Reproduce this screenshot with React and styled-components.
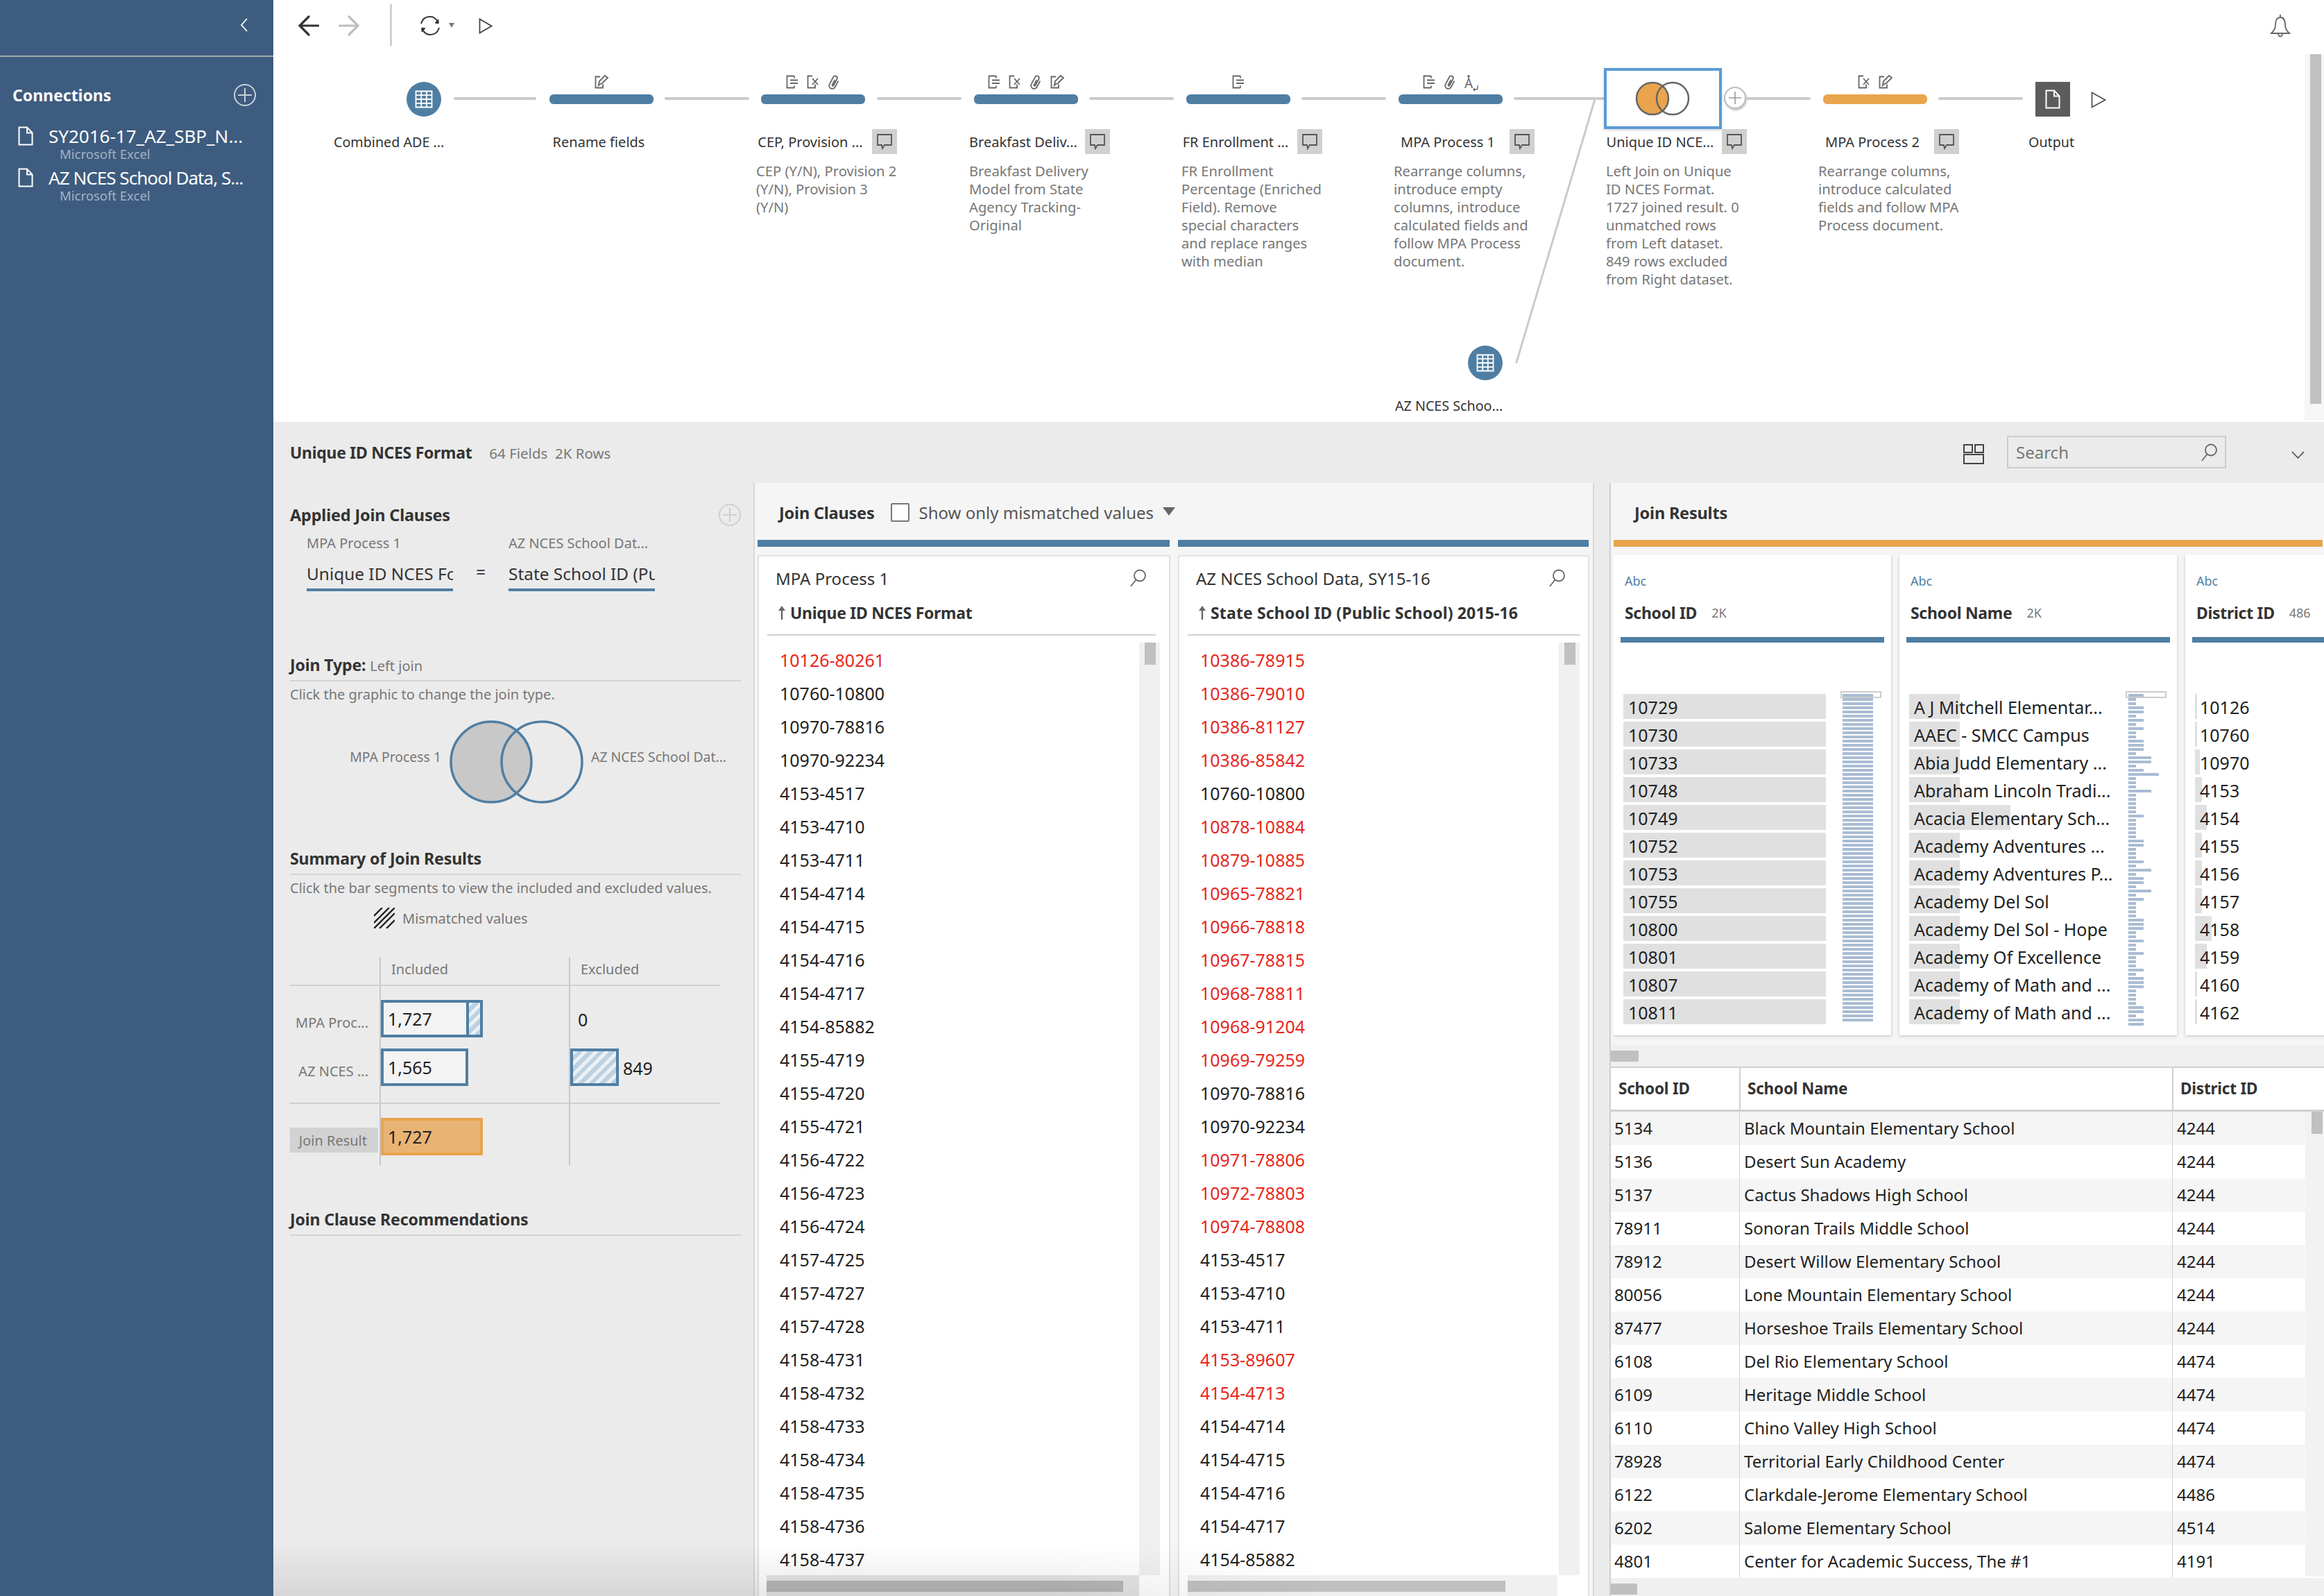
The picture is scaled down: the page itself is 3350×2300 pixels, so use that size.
import React from "react";
import styled, { createGlobalStyle } from "styled-components";

const BLUE = "#4f7ea3";
const ORANGE = "#e9a44c";
const FONT = `"Noto Sans", "Open Sans", sans-serif`;

const Global = createGlobalStyle`
  html, body { margin: 0; padding: 0; background: #ebebeb; }
  body { font-family: ${FONT}; color: #333; }
  * { box-sizing: border-box; }
`;

const Page = styled.div`
  position: relative; width: 3350px; height: 2300px; display: flex; overflow: hidden; background: #ebebeb;
`;
const BottomFade = styled.div`
  position: absolute; left: 394px; bottom: 0; width: 1520px; height: 75px; pointer-events: none;
  background: linear-gradient(to bottom, rgba(0,0,0,0), rgba(0,0,0,.085));
  mask-image: linear-gradient(to right, #000 72%, transparent);
`;

/* ---------- sidebar ---------- */
const Sidebar = styled.aside`
  width: 394px; flex: none; background: #3e5c7f; color: #fff; display: flex; flex-direction: column;
`;
const SideTop = styled.div`
  height: 82px; border-bottom: 2px solid #a7a9ac; display: flex; justify-content: flex-end;
  align-items: flex-start; padding: 26px 36px 0 0;
`;
const ConnHead = styled.div`
  display: flex; align-items: center; justify-content: space-between; padding: 0 25px 0 18px;
  margin-top: 37px; height: 36px;
`;
const ConnTitle = styled.div`font-size: 23px; font-weight: 700;`;
const ConnList = styled.div`margin-top: 27px; display: flex; flex-direction: column; gap: 12px;`;
const ConnItem = styled.div`display: flex; padding-left: 26px; height: 48px;`;
const ConnText = styled.div`margin-left: 22px; margin-top: -2px; display: flex; flex-direction: column;`;
const ConnName = styled.div`font-size: 26px; line-height: 32px; white-space: nowrap; letter-spacing: ${p => p.$ls}px;`;
const ConnSub = styled.div`font-size: 18.5px; line-height: 22px; color: #a5b2c2; margin-left: 16px; white-space: nowrap; margin-top: -1px;`;

/* ---------- main ---------- */
const Main = styled.main`flex: 1; min-width: 0; display: flex; flex-direction: column;`;
const Canvas = styled.section`position: relative; height: 608px; background: #fff; flex: none;`;
const Toolbar = styled.div`display: flex; align-items: flex-start; padding-left: 34px; height: 78px;`;
const ToolIcon = styled.svg`display: block; flex: none; margin-left: ${p => p.$ml || 0}px; margin-top: ${p => p.$mt || 0}px;`;
const ToolDivider = styled.div`width: 3px; height: 60px; margin: 6px 0 0 42px; background: #d0d0d0;`;
const BellWrap = styled.div`margin: 20px 48px 0 auto;`;

const Connectors = styled.svg`position: absolute; left: 0; top: 0; width: 2956px; height: 608px; pointer-events: none;`;
const VScroll = styled.div`position: absolute; right: 0; top: 78px; width: 28px; height: 528px; background: #f6f6f6;`;
const VThumb = styled.div`margin-left: 8px; width: 16px; height: 504px; background: #c0c0c0;`;

const Node = styled.div`
  position: absolute; left: ${p => p.$x - 394}px; top: ${p => p.$y}px; width: 220px; display: flex; flex-direction: column;
`;
const Upper = styled.div`height: 88px; padding-top: 10px; display: flex; flex-direction: column;`;
const IconRow = styled.div`
  height: 20px; width: 150px; margin-left: 7px; display: flex; justify-content: center; gap: 10px; color: #666;
`;
const StepBar = styled.div`
  width: 150px; height: 14px; margin: 8px 0 0 7px; border-radius: 6px; background: ${p => p.$c || BLUE};
`;
const TitleRow = styled.div`display: flex; align-items: center; height: 36px;`;
const NodeTitle = styled.div`
  width: 156px; text-align: center; font-size: 20px; color: #333; white-space: nowrap; margin-right: 11px;
`;
const NoteBtn = styled.div`
  width: 36px; height: 36px; background: #d0d0d0; display: flex; align-items: center; justify-content: center;
`;
const Desc = styled.div`margin-top: 11px; font-size: 20.2px; line-height: 26px; color: #777; white-space: pre-line; width: 230px;`;

const JoinBox = styled.div`
  width: 170px; height: 88px; margin: -10px 0 0 -3px; background: #fff; border: 4px solid #5b9bd5;
  box-shadow: 0 2px 4px rgba(0,0,0,.15); display: flex; align-items: center; justify-content: center;
`;
const AddBubble = styled.div`
  position: absolute; left: 170px; top: 27px; width: 32px; height: 32px; border-radius: 50%; background: #fff;
  border: 2px solid #bdbdbd; box-shadow: 1px 2px 3px rgba(0,0,0,.25); display: flex; align-items: center; justify-content: center;
`;
const SourceNode = styled.div`
  position: absolute; left: ${p => p.$x - 394}px; top: ${p => p.$y}px; width: 170px;
`;
const SourceCircle = styled.div`
  width: 50px; height: 50px; margin-left: 105px; border-radius: 50%; background: ${BLUE};
  display: flex; align-items: center; justify-content: center;
`;
const SourceLabel = styled.div`margin-top: 19px; height: 36px; line-height: 36px; font-size: 19.7px; color: #333; white-space: nowrap;`;
const OutputNode = styled.div`position: absolute; left: ${2924 - 394}px; top: 118px; width: 140px;`;
const OutputBox = styled.div`
  width: 50px; height: 50px; margin-left: 10px; background: #5c5c5c; display: flex; align-items: center; justify-content: center;
`;
const PlayOverlay = styled.svg`position: absolute; left: 90px; top: 14px;`;

/* ---------- details ---------- */
const Details = styled.section`flex: 1; min-height: 0; display: flex; flex-direction: column; background: #ebebeb;`;
const DetailHead = styled.div`height: 88px; flex: none; display: flex; align-items: flex-start; padding: 29px 0 0 24px; position: relative;`;
const DetailTitle = styled.div`font-size: 23px; line-height: 30px; font-weight: 700; color: #333; letter-spacing: -0.3px;`;
const DetailMeta = styled.div`font-size: 20.5px; line-height: 32px; color: #777; margin-left: 25px;`;
const LayoutIcon = styled.svg`margin: 3px 0 0 auto; flex: none;`;
const SearchBox = styled.div`
  width: 316px; height: 47px; margin: -9px 0 0 33px; border: 2px solid #ccc; background: #ebebeb; display: flex; align-items: center;
  padding: 0 10px 0 11px; justify-content: space-between; font-size: 24px; color: #777;
`;
const Chevron = styled.svg`margin: 13px 28px 0 94px; flex: none;`;

const Panels = styled.div`flex: 1; min-height: 0; display: flex;`;

/* left config column */
const ConfigCol = styled.div`width: 692px; flex: none; padding-left: 24px; padding-right: 18px; overflow: hidden;`;
const Section = styled.div`
  display: flex; align-items: center; justify-content: space-between; height: 30px; margin-top: ${p => p.$mt || 0}px;
`;
const SectionTitle = styled.div`font-size: 23.5px; line-height: 30px; font-weight: 700; color: #333; letter-spacing: -0.2px; white-space: nowrap;`;
const SectionRuled = styled.div`
  margin-top: ${p => p.$mt || 0}px; padding-bottom: 7px; border-bottom: 2px solid #d4d4d4; height: 39px; white-space: nowrap;
  font-size: 23.2px; line-height: 30px; font-weight: 700; color: #333; letter-spacing: -0.2px;
`;
const Lighter = styled.span`font-weight: 400; font-size: 20px; color: #777; letter-spacing: 0;`;
const Hint = styled.div`margin-top: 6px; font-size: 20px; line-height: 26px; color: #777; white-space: nowrap;`;
const ClauseRow = styled.div`display: grid; grid-template-columns: 211px 80px 211px; padding-left: 24px; margin-top: ${p => p.$mt || 0}px; align-items: start;`;
const ClauseLabel = styled.div`font-size: 20px; line-height: 26px; color: #777; white-space: nowrap;`;
const ClauseField = styled.div`
  height: 46px; border-bottom: 4px solid ${BLUE}; font-size: 24.4px; line-height: 42px; color: #333; overflow: hidden; white-space: nowrap;
`;
const ClauseEq = styled.div`text-align: center; font-size: 24px; line-height: 36px; color: #333;`;

const VennRow = styled.div`display: flex; align-items: flex-start; margin-top: 22px; height: 125px;`;
const VennLabel = styled.div`
  width: ${p => p.$w}px; text-align: ${p => p.$right ? "right" : "left"}; margin-top: 42px; font-size: 19.4px; line-height: 26px; color: #777; white-space: nowrap;
`;
const Legend = styled.div`display: flex; align-items: center; gap: 11px; height: 32px; margin: 14px 0 0 121px; font-size: 20px; color: #777;`;
const SumTable = styled.div`margin-top: 40px; width: 620px;`;
const SumRow = styled.div`display: flex; height: ${p => p.$h}px; border-bottom: ${p => p.$ruled ? "2px solid #cfcfcf" : "none"};`;
const SumLabelCell = styled.div`
  width: 129px; flex: none; padding-top: ${p => p.$top || 0}px; text-align: right; padding-right: 16px; font-size: 20px; line-height: 26px; color: #777; white-space: nowrap;
`;
const JoinLabel = styled.div`
  width: 127px; height: 36px; margin-top: 34px; background: #d2d2d2; text-align: right; padding-right: 16px; font-size: 20px; line-height: 38px; color: #777; flex: none; margin-right: 2px;
`;
const SumCell = styled.div`
  width: ${p => p.$w}px; flex: none; border-left: 2px solid #c8c8c8; padding-top: ${p => p.$top || 0}px; display: flex; align-items: flex-start;
`;
const HeadText = styled.div`font-size: 20px; line-height: 36px; color: #777; padding-left: 15px;`;
const SumBar = styled.div`
  width: ${p => p.$w}px; height: 54px; position: relative; border: 4px solid ${p => p.$c || BLUE}; background: ${p => p.$fill || "#f3f3f3"};
  font-size: 25px; line-height: 47px; color: #222; padding-left: 6px;
  ${p => p.$hatched ? `background: repeating-linear-gradient(-45deg, #bcd2e3 0 6px, #eef0f2 6px 11px);` : ""}
`;
const BarHatch = styled.div`
  position: absolute; right: 0; top: 0; bottom: 0; width: 20px; border-left: 4px solid ${BLUE};
  background: repeating-linear-gradient(-45deg, #bcd2e3 0 6px, #eef0f2 6px 11px);
`;
const SumValue = styled.div`font-size: 25px; line-height: 56px; color: #222; margin-left: ${p => p.$ml}px;`;

/* join clause panel */
const ClausePanel = styled.div`
  width: 1212px; flex: none; margin-right: 22px; background: #f5f5f5; border-left: 2px solid #d8d8d8; border-right: 2px solid #d8d8d8; display: flex; flex-direction: column; min-height: 0;
`;
const PanelHead = styled.div`
  height: 82px; flex: none; display: flex; align-items: flex-start; padding: 28px 0 0 ${p => p.$pl}px;
`;
const PanelTitle = styled.div`font-weight: 700; font-size: 23.5px; line-height: 30px; color: #333; letter-spacing: -0.2px;`;
const Check = styled.div`width: 27px; height: 27px; margin: 1px 0 0 23px; background: #fff; border: 2px solid #777; border-radius: 2px;`;
const CheckLabel = styled.div`margin-left: 14px; font-size: 24px; line-height: 30px; color: #555; white-space: nowrap;`;
const Caret = styled.div`
  margin: 7px 0 0 13px; width: 0; height: 0; border-left: 9px solid transparent; border-right: 9px solid transparent; border-top: 12px solid #666;
`;
const ClauseCols = styled.div`flex: 1; min-height: 0; display: grid; grid-template-columns: 594px 592px; gap: 12px; padding-left: 4px;`;
const ClauseCol = styled.div`display: flex; flex-direction: column; min-height: 0;`;
const ColorBar = styled.div`height: 10px; flex: none; background: ${p => p.$c || BLUE};`;
const ResultBar = styled(ColorBar)`margin: 0 2px 0 4px;`;
const ListCard = styled.div`
  position: relative; flex: 1; min-height: 0; margin: 14px 1px 0 2px; background: #fff; box-shadow: 0 0 0 2px #e2e2e2; overflow: hidden;
`;
const ListTitleRow = styled.div`
  display: flex; justify-content: space-between; align-items: center; height: 30px; margin-top: 16px; padding: 0 32px 0 24px; font-size: 24px; color: #333; white-space: nowrap;
`;
const ListField = styled.div`
  display: flex; align-items: center; gap: 6px; height: 30px; margin-top: 20px; padding-left: 27px; font-size: 23px; font-weight: 700; color: #333; white-space: nowrap; letter-spacing: ${p => p.$ls}px;
`;
const ListRule = styled.div`height: 2px; margin: 16px ${p => p.$mr}px 0 12px; background: #d0d0d0;`;
const ListRows = styled.div`margin-top: 11px; padding-left: 30px;`;
const ListRow = styled.div`height: 48px; line-height: 48px; font-size: 25px; color: ${p => p.$red ? "#e8261c" : "#222"};`;
const ListTrack = styled.div`position: absolute; left: ${p => p.$x}px; top: 124px; bottom: 30px; width: 30px; background: #f0f0f0;`;
const ListThumb = styled.div`margin-left: 8px; width: 16px; height: 32px; background: #c0c0c0;`;
const HTrack = styled.div`position: absolute; left: ${p => p.$x}px; bottom: 0; width: ${p => p.$w}px; height: 30px; background: ${p => p.$bg}; padding-top: 8px;`;
const HThumb = styled.div`height: 16px; width: ${p => p.$w}px; background: ${p => p.$c};`;

/* results panel */
const ResultPanel = styled.div`flex: 1; min-width: 0; background: #f5f5f5; border-left: 2px solid #cfcfcf; display: flex; flex-direction: column; min-height: 0;`;
const ResultCards = styled.div`display: flex; gap: 12px; margin: 12px 0 0 4px; height: 700px; padding-bottom: 8px; flex: none; overflow: hidden;`;
const ProfileCard = styled.div`position: relative; width: 400px; flex: none; height: 692px; background: #fff; box-shadow: 0 1px 4px rgba(0,0,0,.22);`;
const AbcTag = styled.div`height: 24px; margin: 25px 0 0 16px; font-size: 18px; line-height: 24px; color: ${BLUE};`;
const ProfileName = styled.div`
  height: 30px; margin: 19px 0 0 16px; display: flex; align-items: center; font-size: 23px; font-weight: 700; color: #333; letter-spacing: -0.3px; white-space: nowrap;
`;
const ProfileCount = styled.span`font-weight: 400; font-size: 18px; color: #777; margin-left: 21px; letter-spacing: 0;`;
const ProfileBar = styled.div`height: 8px; margin: 20px 10px 0; background: ${BLUE};`;
const ValueList = styled.div`margin: 74px 0 0 14px; display: flex; flex-direction: column; gap: 4px;`;
const ValueRow = styled.div`position: relative; height: 36px; width: 292px; font-size: 25px; line-height: 38px; color: #222; padding-left: 7px; white-space: nowrap;`;
const ValueFill = styled.div`position: absolute; left: 0; top: 0; bottom: 0; width: ${p => p.$w}px; background: #e0e0e0;`;
const ValueText = styled.span`position: relative;`;
const Spark = styled.div`position: absolute; left: 330px; top: 200px; display: flex; flex-direction: column; gap: 2px;`;
const SparkBar = styled.div`height: 4px; width: ${p => p.$w}px; background: #a9bcd4;`;
const Brush = styled.div`position: absolute; left: ${p => p.$x}px; top: 196px; width: 59px; height: 10px; border: 2px solid #ccc;`;
const ResultHScroll = styled.div`height: 31px; margin-top: 6px; background: #f0f0f0; padding-top: 8px; flex: none;`;
const ResultHThumb = styled.div`width: 40px; height: 16px; background: #c0c0c0;`;
const DataTable = styled.div`position: relative; flex: 1; min-height: 0; background: #fff; border-top: 2px solid #d0d0d0; display: flex; flex-direction: column;`;
const TableHead = styled.div`
  display: grid; grid-template-columns: 185px 624px 1fr; height: 63px; flex: none; border-bottom: 3px solid #d0d0d0; font-size: 22.5px; font-weight: 700; color: #333; letter-spacing: -0.2px;
`;
const HeadCell = styled.div`
  border-left: ${p => p.$first ? "none" : "2px solid #d0d0d0"}; padding-left: ${p => p.$first ? 11 : 10}px; line-height: 60px;
`;
const TableRow = styled.div`
  display: grid; grid-template-columns: 185px 624px 1fr; height: 48px; flex: none; background: ${p => p.$alt ? "#f5f5f5" : "#fff"}; font-size: 24px; color: #222;
`;
const BodyCell = styled.div`
  border-left: ${p => p.$first ? "none" : "1px solid #d0d0d0"}; padding-left: ${p => p.$first ? 5 : 6}px; line-height: 48px; white-space: nowrap;
`;
const TableVTrack = styled.div`position: absolute; right: 0; top: 63px; bottom: 28px; width: 27px; background: #f2f2f2; padding: 0 2px 0 9px;`;
const TableVThumb = styled.div`height: 32px; background: #c0c0c0;`;
const TableHScroll = styled.div`height: 28px; margin-top: auto; flex: none; background: #f0f0f0; padding-top: 8px;`;
const TableHThumb = styled.div`width: 38px; height: 16px; background: #c0c0c0;`;

/* ---------- icons ---------- */
const stroke = { fill: "none", stroke: "currentColor", strokeWidth: 1.8 };
const IconSvg = styled.svg`display: block; color: ${p => p.$c || "#666"}; flex: none;`;
const ColumnIco = () => (
  <IconSvg width="20" height="20" viewBox="0 0 20 20"><path {...stroke} d="M13 1.5H2.5v17H13M13 18.5v-3M13 1.5v3M7 7.5h11M7 12h11" /></IconSvg>
);
const RemoveIco = () => (
  <IconSvg width="20" height="20" viewBox="0 0 20 20"><path {...stroke} d="M9 1.5H2.5v17H13v-5M9 5l8 9M17 5l-8 9" /></IconSvg>
);
const ClipIco = () => (
  <IconSvg width="20" height="22" viewBox="0 0 20 22">
    <path {...stroke} transform="rotate(28 10 11)" d="M14.5 6v10a4.500 4.500 0 0 1-9 0V4.500a3 3 0 0 1 6 0V15a1 1 0 0 1-2 0V7" />
  </IconSvg>
);
const EditIco = () => (
  <IconSvg width="22" height="20" viewBox="0 0 22 20"><path {...stroke} d="M9 2.5H2.5v16H13v-5M7 14l1-5 8-8 4 3-8 8zM6 16l2-2" /></IconSvg>
);
const TypeIco = () => (
  <IconSvg width="22" height="25" viewBox="0 0 22 25">
    <text x="1" y="19" fontFamily={FONT} fontSize="19" fill="#666">A</text>
    <path {...stroke} strokeWidth="1.4" d="M7 0.500v5M5.200 2.500 7 0.500l1.800 2M20 15v4a2 2 0 0 1-2 2h-4M16 19l-2 2 2 2" />
  </IconSvg>
);
const ICONS = { c: ColumnIco, r: RemoveIco, p: ClipIco, e: EditIco, t: TypeIco };
const NoteIco = () => (
  <IconSvg width="24" height="24" viewBox="0 0 24 24" $c="#555"><path {...stroke} d="M2 2h20v15H12l-3 5-1-5H2z" /></IconSvg>
);
const GridIco = () => (
  <IconSvg width="26" height="26" viewBox="0 0 26 26" $c="#fff">
    <path {...stroke} d="M1.5 1.5h23v23h-23zM9.200 1.5v23M16.800 1.5v23M1.5 7.200h23M1.5 13h23M1.5 18.800h23" />
  </IconSvg>
);
const DocIco = ({ color = "#fff" }) => (
  <IconSvg width="22" height="28" viewBox="0 0 22 28" $c={color}>
    <path {...stroke} strokeWidth="2" d="M1.5 1.5H13l7.5 8v17H1.5zM13 1.5V9.500h7.5" />
  </IconSvg>
);
const Mag = ({ size = 26 }) => (
  <IconSvg width={size} height={size} viewBox="0 0 26 26" $c="#666">
    <circle {...stroke} cx="16" cy="9.500" r="8" /><path {...stroke} d="M10.500 15.500 3 25" />
  </IconSvg>
);
const Plus = ({ size = 32, color = "#c8d0da", width = 2 }) => (
  <IconSvg width={size} height={size} viewBox="0 0 32 32" $c={color}>
    <circle cx="16" cy="16" r="15" fill="none" stroke="currentColor" strokeWidth={width} />
    <path d="M16 6v20M6 16h20" fill="none" stroke="currentColor" strokeWidth={width} />
  </IconSvg>
);
const SortArrow = () => (
  <IconSvg width="12" height="20" viewBox="0 0 12 20" $c="#666"><path d="M6 0 11 7H7.200v13H4.800V7H1z" fill="currentColor" /></IconSvg>
);

/* ---------- data ---------- */
const steps = [
  { x: 785, icons: "e", title: "Rename fields" },
  { x: 1090, icons: "crp", title: "CEP, Provision ...", note: 1, desc: "CEP (Y/N), Provision 2\n(Y/N), Provision 3\n(Y/N)" },
  { x: 1397, icons: "crpe", title: "Breakfast Deliv...", note: 1, desc: "Breakfast Delivery\nModel from State\nAgency Tracking-\nOriginal" },
  { x: 1703, icons: "c", title: "FR Enrollment ...", note: 1, desc: "FR Enrollment\nPercentage (Enriched\nField). Remove\nspecial characters\nand replace ranges\nwith median" },
  { x: 2009, icons: "cpt", title: "MPA Process 1", note: 1, desc: "Rearrange columns,\nintroduce empty\ncolumns, introduce\ncalculated fields and\nfollow MPA Process\ndocument." },
  { x: 2621, icons: "re", title: "MPA Process 2", note: 1, color: ORANGE, desc: "Rearrange columns,\nintroduce calculated\nfields and follow MPA\nProcess document." },
];
const connectors = [[656,771],[960,1078],[1266,1384],[1572,1690],[1878,1996],[2184,2312],[2520,2608],[2796,2914]];

const leftIds = ["10126-80261","10760-10800","10970-78816","10970-92234","4153-4517","4153-4710","4153-4711","4154-4714","4154-4715","4154-4716","4154-4717","4154-85882","4155-4719","4155-4720","4155-4721","4156-4722","4156-4723","4156-4724","4157-4725","4157-4727","4157-4728","4158-4731","4158-4732","4158-4733","4158-4734","4158-4735","4158-4736","4158-4737"];
const rightIds = [["10386-78915",1],["10386-79010",1],["10386-81127",1],["10386-85842",1],["10760-10800"],["10878-10884",1],["10879-10885",1],["10965-78821",1],["10966-78818",1],["10967-78815",1],["10968-78811",1],["10968-91204",1],["10969-79259",1],["10970-78816"],["10970-92234"],["10971-78806",1],["10972-78803",1],["10974-78808",1],["4153-4517"],["4153-4710"],["4153-4711"],["4153-89607",1],["4154-4713",1],["4154-4714"],["4154-4715"],["4154-4716"],["4154-4717"],["4154-85882"]];

const units2 = [2,1,1,2,2,1,2,1,2,1,1,2,2,2,1,3,3,1,2,4,1,1,1,3,1,1,1,1,1,2,1,1,1,1,1,2,2,1,1,1,2,1,3,1,2,2,1,3,1,2,1,1,1,1,2,2,2,1,1,2,1,1,2,1,1,1,2,1,2,2,2,1,1,1,1,2,2,1,2,2];
const profiles = [
  { name: "School ID", count: "2K", fill: () => 292, spark: Array(79).fill(44),
    values: ["10729","10730","10733","10748","10749","10752","10753","10755","10800","10801","10807","10811"] },
  { name: "School Name", count: "2K", fill: i => (i === 4 ? 146 : 73), spark: units2.map(u => u * 11),
    values: ["A J Mitchell Elementar...","AAEC - SMCC Campus","Abia Judd Elementary ...","Abraham Lincoln Tradi...","Acacia Elementary Sch...","Academy Adventures ...","Academy Adventures P...","Academy Del Sol","Academy Del Sol - Hope","Academy Of Excellence","Academy of Math and ...","Academy of Math and ..."] },
  { name: "District ID", count: "486", fill: i => [3,3,7,10,17,10,10,10,24,17,3,3][i], spark: [],
    values: ["10126","10760","10970","4153","4154","4155","4156","4157","4158","4159","4160","4162"] },
];
const tableRows = [
  ["5134","Black Mountain Elementary School","4244"],["5136","Desert Sun Academy","4244"],["5137","Cactus Shadows High School","4244"],
  ["78911","Sonoran Trails Middle School","4244"],["78912","Desert Willow Elementary School","4244"],["80056","Lone Mountain Elementary School","4244"],
  ["87477","Horseshoe Trails Elementary School","4244"],["6108","Del Rio Elementary School","4474"],["6109","Heritage Middle School","4474"],
  ["6110","Chino Valley High School","4474"],["78928","Territorial Early Childhood Center","4474"],["6122","Clarkdale-Jerome Elementary School","4486"],
  ["6202","Salome Elementary School","4514"],["4801","Center for Academic Success, The #1","4191"],
];
const connections = [
  { name: "SY2016-17_AZ_SBP_N...", ls: 0 },
  { name: "AZ NCES School Data, S...", ls: -0.95 },
];

const Step = ({ s }) => (
  <Node $x={s.x} $y={98}>
    <Upper>
      <IconRow>{s.icons.split("").map((k, i) => { const I = ICONS[k]; return <I key={i} />; })}</IconRow>
      <StepBar $c={s.color} />
    </Upper>
    <TitleRow>
      <NodeTitle>{s.title}</NodeTitle>
      {s.note && <NoteBtn><NoteIco /></NoteBtn>}
    </TitleRow>
    {s.desc && <Desc>{s.desc}</Desc>}
  </Node>
);

export default function App() {
  return (
    <Page>
      <Global />
      <Sidebar>
        <SideTop>
          <svg width="12" height="20" viewBox="0 0 12 20"><path d="M10 1 2 10l8 9" fill="none" stroke="#fff" strokeWidth="1.8" /></svg>
        </SideTop>
        <ConnHead>
          <ConnTitle>Connections</ConnTitle>
          <Plus />
        </ConnHead>
        <ConnList>
          {connections.map(c => (
            <ConnItem key={c.name}>
              <DocIco />
              <ConnText>
                <ConnName $ls={c.ls}>{c.name}</ConnName>
                <ConnSub>Microsoft Excel</ConnSub>
              </ConnText>
            </ConnItem>
          ))}
        </ConnList>
      </Sidebar>
      <Main>
        <Canvas>
          <Toolbar>
            <ToolIcon $mt={22} width="32" height="30" viewBox="0 0 32 30"><path d="M31 15H4M17 2 4 15l13 13" fill="none" stroke="#333" strokeWidth="3.2" strokeLinecap="round" /></ToolIcon>
            <ToolIcon $ml={28} $mt={22} width="32" height="30" viewBox="0 0 32 30"><path d="M1 15h27M15 2l13 13-13 13" fill="none" stroke="#bdbdbd" strokeWidth="3.2" strokeLinecap="round" /></ToolIcon>
            <ToolDivider />
            <ToolIcon $ml={39} $mt={22} width="32" height="30" viewBox="0 0 32 30">
              <path d="M3 12C5 5 10 2 16 2c5 0 9 3 12 9M29 18c-2 7-7 10-13 10-5 0-9-3-12-9" fill="none" stroke="#333" strokeWidth="2" />
              <path d="M28 12l-5-1 5-5zM4 18l5 1-5 5z" fill="#333" stroke="#333" />
            </ToolIcon>
            <ToolIcon $ml={11} $mt={33} width="8" height="7" viewBox="0 0 8 7"><path d="M0 0h8L4 7z" fill="#777" /></ToolIcon>
            <ToolIcon $ml={35} $mt={26} width="20" height="23" viewBox="0 0 20 23"><path d="M1.5 1.5v20l17-10z" fill="none" stroke="#444" strokeWidth="1.8" /></ToolIcon>
            <BellWrap>
              <svg width="30" height="34" viewBox="0 0 30 34"><path d="M15 1v4M15 5c-5 0-7 5-7 11 0 6-3 9-6 12h26c-3-3-6-6-6-12 0-6-2-11-7-11M12 28c0 3 1.5 4.500 3 4.500s3-1.5 3-4.500" fill="none" stroke="#666" strokeWidth="1.8" /></svg>
            </BellWrap>
          </Toolbar>

          <Connectors viewBox="394 0 2956 608">
            {connectors.map(([a, b]) => <line key={a} x1={a} x2={b} y1="142" y2="142" stroke="#cbcbcb" strokeWidth="4" strokeLinecap="round" />)}
            <line x1="2299" y1="143" x2="2186" y2="522" stroke="#cbcbcb" strokeWidth="3" strokeLinecap="round" />
          </Connectors>

          <SourceNode $x={481} $y={118}>
            <SourceCircle><GridIco /></SourceCircle>
            <SourceLabel>Combined ADE ...</SourceLabel>
          </SourceNode>
          {steps.map(s => <Step key={s.title} s={s} />)}
          <Node $x={2315} $y={98}>
            <Upper>
              <JoinBox>
                <svg width="80" height="52" viewBox="0 0 80 52">
                  <circle cx="25" cy="26" r="23" fill={ORANGE} stroke="#666" strokeWidth="2.5" />
                  <circle cx="54" cy="26" r="23" fill="none" stroke="#666" strokeWidth="2.5" />
                </svg>
              </JoinBox>
              <AddBubble><svg width="20" height="20" viewBox="0 0 20 20"><path d="M10 1v18M1 10h18" stroke="#999" strokeWidth="1.6" /></svg></AddBubble>
            </Upper>
            <TitleRow>
              <NodeTitle>Unique ID NCE...</NodeTitle>
              <NoteBtn><NoteIco /></NoteBtn>
            </TitleRow>
            <Desc>{"Left Join on Unique\nID NCES Format.\n1727 joined result. 0\nunmatched rows\nfrom Left dataset.\n849 rows excluded\nfrom Right dataset."}</Desc>
          </Node>
          <SourceNode $x={2011} $y={498}>
            <SourceCircle><GridIco /></SourceCircle>
            <SourceLabel>AZ NCES Schoo...</SourceLabel>
          </SourceNode>
          <OutputNode>
            <OutputBox><DocIco /></OutputBox>
            <PlayOverlay width="22" height="24" viewBox="0 0 22 24"><path d="M1.5 1.5v21l19-10.500z" fill="none" stroke="#555" strokeWidth="1.8" /></PlayOverlay>
            <SourceLabel>Output</SourceLabel>
          </OutputNode>
          <VScroll><VThumb /></VScroll>
        </Canvas>

        <Details>
          <DetailHead>
            <DetailTitle>Unique ID NCES Format</DetailTitle>
            <DetailMeta>64 Fields&nbsp;&nbsp;2K Rows</DetailMeta>
            <LayoutIcon width="30" height="29" viewBox="0 0 30 29"><path d="M1 1h12v11H1zM17 1h12v11H17zM1 15h28v13H1z" fill="none" stroke="#444" strokeWidth="2" /></LayoutIcon>
            <SearchBox>Search<Mag /></SearchBox>
            <Chevron width="19" height="11" viewBox="0 0 19 11"><path d="M1 1l8.500 9L18 1" fill="none" stroke="#555" strokeWidth="1.8" /></Chevron>
          </DetailHead>
          <Panels>
            <ConfigCol>
              <Section $mt={31}>
                <SectionTitle>Applied Join Clauses</SectionTitle>
                <Plus size={32} color="#cfcfcf" />
              </Section>
              <ClauseRow $mt={13}>
                <ClauseLabel>MPA Process 1</ClauseLabel><span /><ClauseLabel>AZ NCES School Dat...</ClauseLabel>
              </ClauseRow>
              <ClauseRow $mt={10}>
                <ClauseField>Unique ID NCES Format</ClauseField>
                <ClauseEq>=</ClauseEq>
                <ClauseField>State School ID (Public School) 2015-16</ClauseField>
              </ClauseRow>
              <SectionRuled $mt={91}>Join Type: <Lighter>Left join</Lighter></SectionRuled>
              <Hint>Click the graphic to change the join type.</Hint>
              <VennRow>
                <VennLabel $w={218} $right>MPA Process 1</VennLabel>
                <svg width="216" height="125" viewBox="0 0 216 125" style={{ flex: "none" }}>
                  <circle cx="72" cy="62" r="58" fill="#c8c8c8" stroke={BLUE} strokeWidth="3.5" />
                  <circle cx="145" cy="62" r="58" fill="none" stroke={BLUE} strokeWidth="3.5" />
                </svg>
                <VennLabel $w={200}>AZ NCES School Dat...</VennLabel>
              </VennRow>
              <SectionRuled $mt={61}>Summary of Join Results</SectionRuled>
              <Hint>Click the bar segments to view the included and excluded values.</Hint>
              <Legend>
                <svg width="30" height="30" viewBox="0 0 30 30"><path d="M0 12 12 0M0 22 22 0M0 30 30 0M8 30 30 8M18 30 30 18" stroke="#222" strokeWidth="2.4" /></svg>
                Mismatched values
              </Legend>
              <SumTable>
                <SumRow $h={42} $ruled>
                  <SumLabelCell />
                  <SumCell $w={273}><HeadText>Included</HeadText></SumCell>
                  <SumCell $w={218}><HeadText>Excluded</HeadText></SumCell>
                </SumRow>
                <SumRow $h={82}>
                  <SumLabelCell $top={40}>MPA Proc...</SumLabelCell>
                  <SumCell $w={273} $top={20}><SumBar $w={147}>1,727<BarHatch /></SumBar></SumCell>
                  <SumCell $w={218} $top={20}><SumValue $ml={11}>0</SumValue></SumCell>
                </SumRow>
                <SumRow $h={88} $ruled>
                  <SumLabelCell $top={28}>AZ NCES ...</SumLabelCell>
                  <SumCell $w={273} $top={8}><SumBar $w={126}>1,565</SumBar></SumCell>
                  <SumCell $w={218} $top={8}><SumBar $w={70} $hatched /><SumValue $ml={6}>849</SumValue></SumCell>
                </SumRow>
                <SumRow $h={88}>
                  <JoinLabel>Join Result</JoinLabel>
                  <SumCell $w={273} $top={20}><SumBar $w={147} $c={ORANGE} $fill="#e9b374">1,727</SumBar></SumCell>
                  <SumCell $w={218} />
                </SumRow>
              </SumTable>
              <SectionRuled $mt={63}>Join Clause Recommendations</SectionRuled>
            </ConfigCol>

            <ClausePanel>
              <PanelHead $pl={35}>
                <PanelTitle>Join Clauses</PanelTitle>
                <Check />
                <CheckLabel>Show only mismatched values</CheckLabel>
                <Caret />
              </PanelHead>
              <ClauseCols>
                <ClauseCol>
                  <ColorBar />
                  <ListCard>
                    <ListTitleRow>MPA Process 1<Mag /></ListTitleRow>
                    <ListField $ls={-0.3}><SortArrow />Unique ID NCES Format</ListField>
                    <ListRule $mr={19} />
                    <ListRows>{leftIds.map((v, i) => <ListRow key={v} $red={i === 0}>{v}</ListRow>)}</ListRows>
                    <ListTrack $x={548}><ListThumb /></ListTrack>
                    <HTrack $x={11} $w={537} $bg="#e5e5e5"><HThumb $w={514} $c="#b8b8b8" /></HTrack>
                  </ListCard>
                </ClauseCol>
                <ClauseCol>
                  <ColorBar />
                  <ListCard>
                    <ListTitleRow>AZ NCES School Data, SY15-16<Mag /></ListTitleRow>
                    <ListField $ls={0.15}><SortArrow />State School ID (Public School) 2015-16</ListField>
                    <ListRule $mr={11} />
                    <ListRows>{rightIds.map(([v, r]) => <ListRow key={v} $red={!!r}>{v}</ListRow>)}</ListRows>
                    <ListTrack $x={547}><ListThumb /></ListTrack>
                    <HTrack $x={12} $w={533} $bg="#f0f0f0"><HThumb $w={458} $c="#c0c0c0" /></HTrack>
                  </ListCard>
                </ClauseCol>
              </ClauseCols>
            </ClausePanel>

            <ResultPanel>
              <PanelHead $pl={34}><PanelTitle>Join Results</PanelTitle></PanelHead>
              <ResultBar $c={ORANGE} />
              <ResultCards>
                {profiles.map((p, ci) => (
                  <ProfileCard key={p.name}>
                    <AbcTag>Abc</AbcTag>
                    <ProfileName>{p.name}<ProfileCount>{p.count}</ProfileCount></ProfileName>
                    <ProfileBar />
                    <ValueList>
                      {p.values.map((v, i) => (
                        <ValueRow key={i}><ValueFill $w={p.fill(i)} /><ValueText>{v}</ValueText></ValueRow>
                      ))}
                    </ValueList>
                    {p.spark.length > 0 && <Spark>{p.spark.map((w, i) => <SparkBar key={i} $w={w} />)}</Spark>}
                    {p.spark.length > 0 && <Brush $x={ci === 0 ? 327 : 326} />}
                  </ProfileCard>
                ))}
              </ResultCards>
              <ResultHScroll><ResultHThumb /></ResultHScroll>
              <DataTable>
                <TableHead>
                  <HeadCell $first>School ID</HeadCell><HeadCell>School Name</HeadCell><HeadCell>District ID</HeadCell>
                </TableHead>
                {tableRows.map((r, i) => (
                  <TableRow key={r[0]} $alt={i % 2 === 0}>
                    <BodyCell $first>{r[0]}</BodyCell><BodyCell>{r[1]}</BodyCell><BodyCell>{r[2]}</BodyCell>
                  </TableRow>
                ))}
                <TableVTrack><TableVThumb /></TableVTrack>
                <TableHScroll><TableHThumb /></TableHScroll>
              </DataTable>
            </ResultPanel>
          </Panels>
        </Details>
      </Main>
      <BottomFade />
    </Page>
  );
}
